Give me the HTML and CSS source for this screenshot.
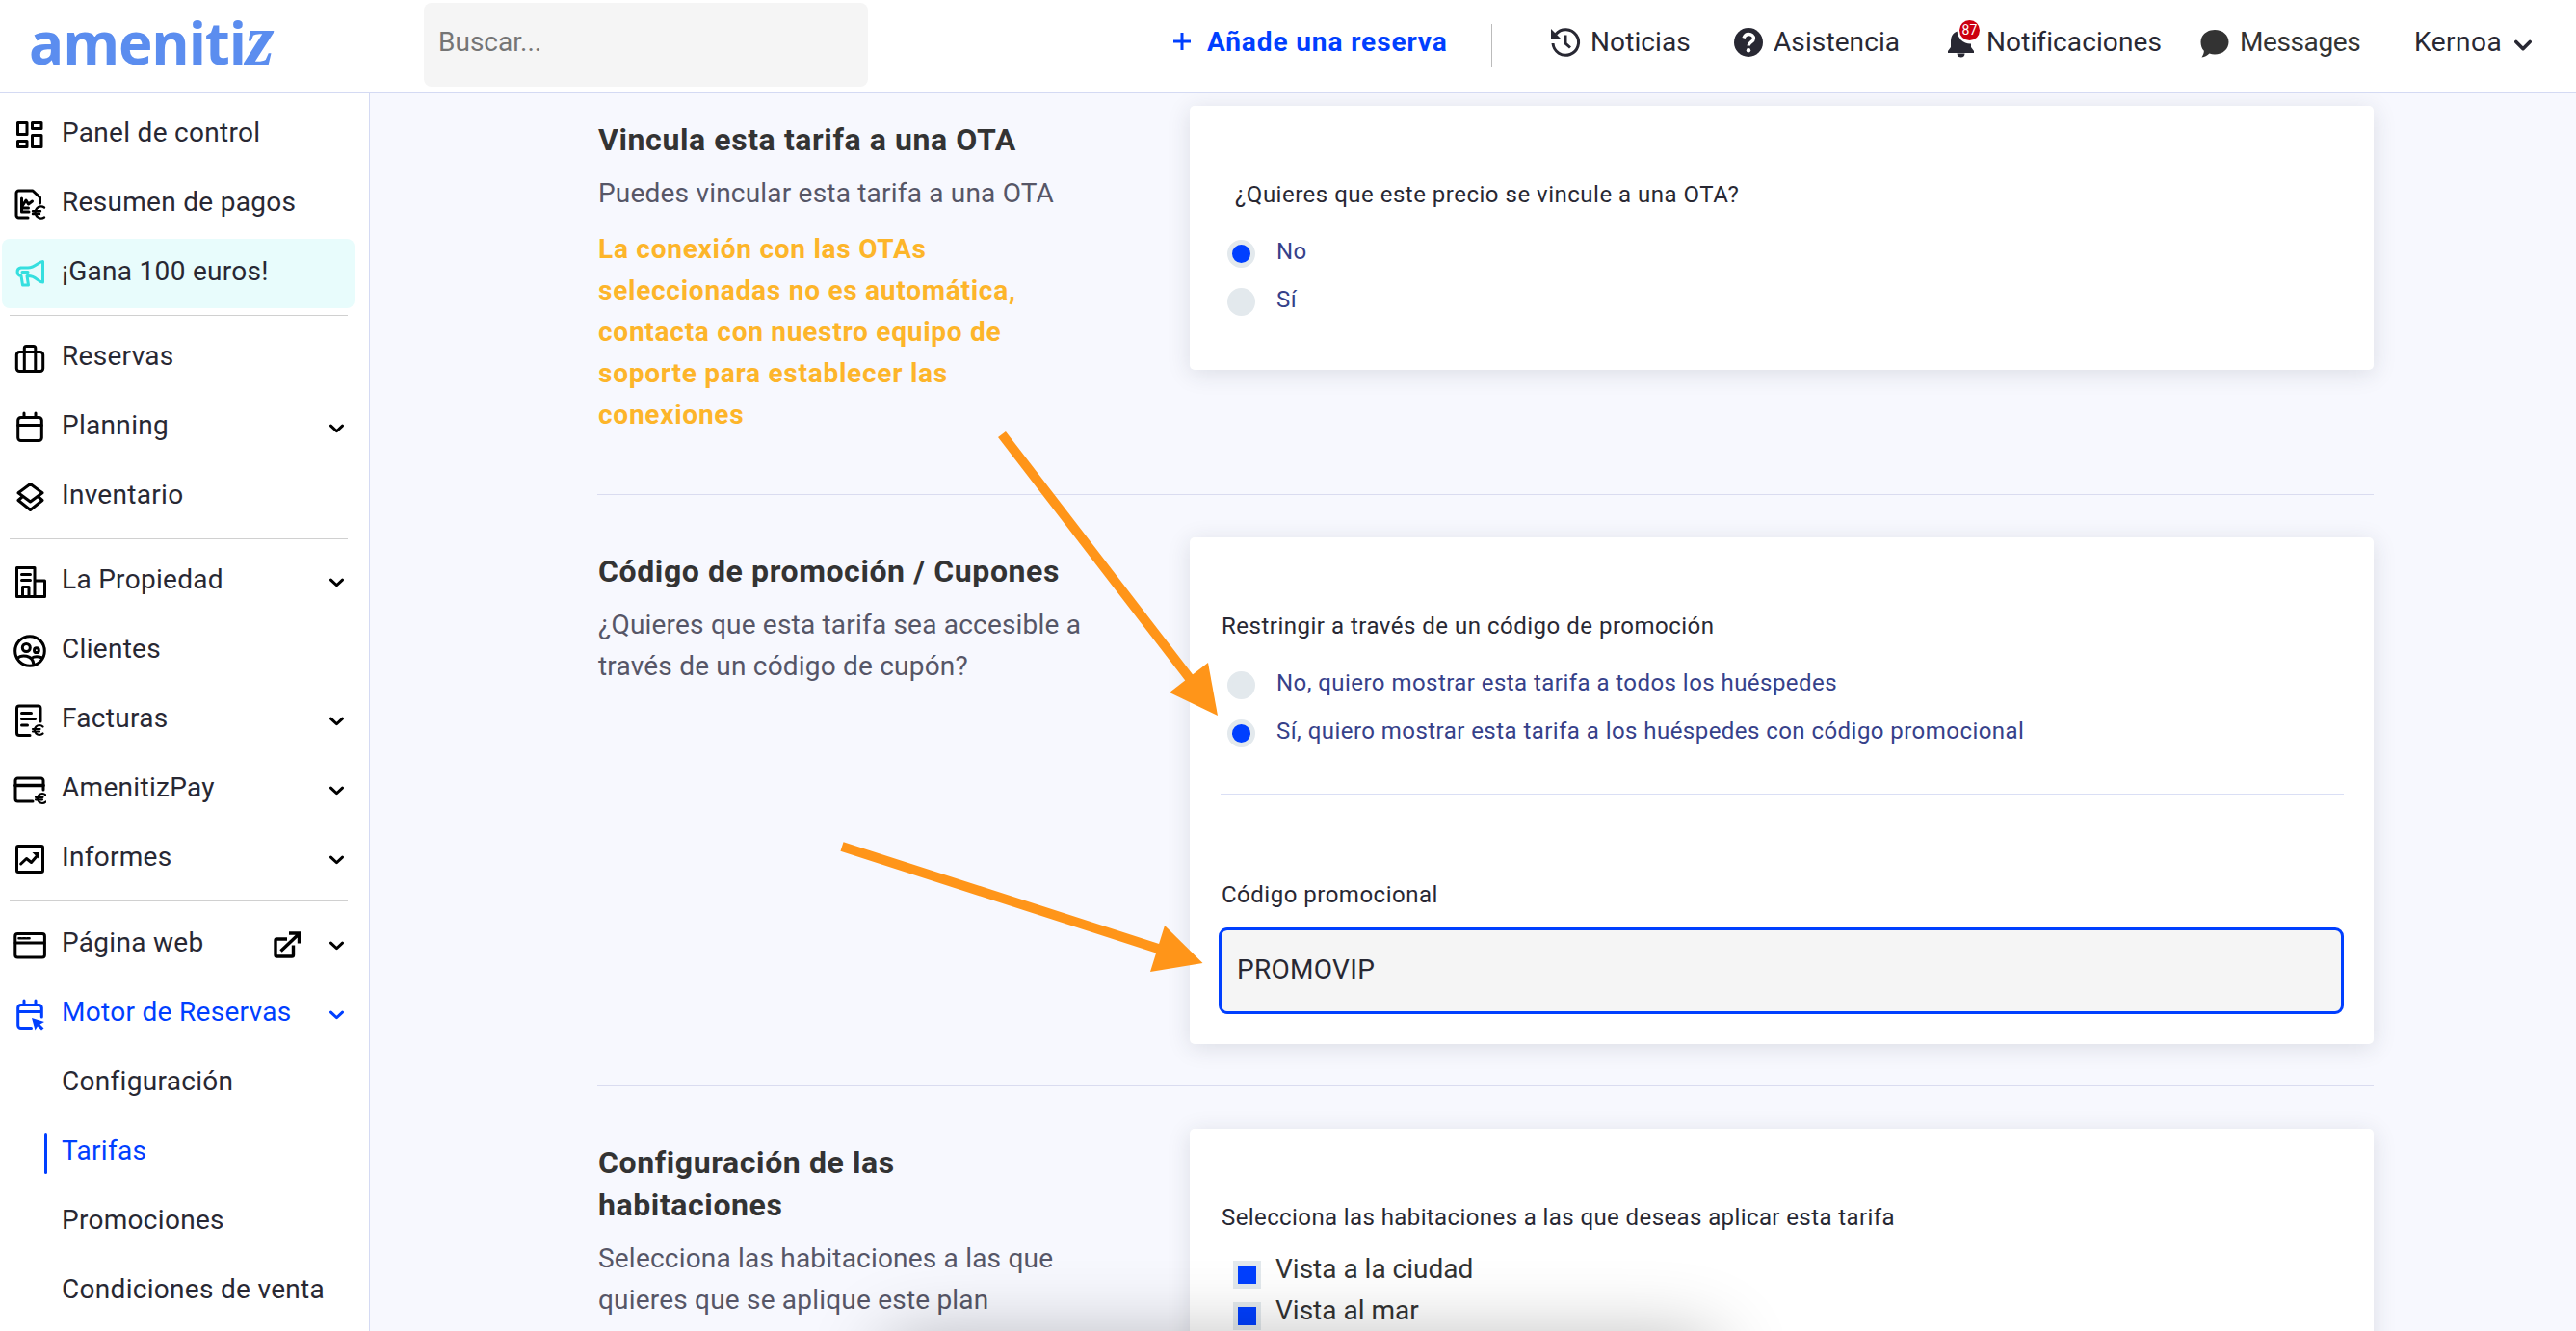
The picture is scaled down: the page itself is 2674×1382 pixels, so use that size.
FILE: index.html
```
<!DOCTYPE html>
<html lang="es">
<head>
  <meta charset="utf-8">
  <title>Amenitiz - Tarifas</title>
  <link rel="stylesheet" href="styles.css">
</head>
<body>
  <header class="topbar">
    <a class="logo">ameniti<span class="logo-z">z</span></a>
    <input class="search" type="text" placeholder="Buscar...">
    <nav class="top-nav">
      <a class="add-booking">
        <svg class="plus" viewBox="0 0 18 18"><path d="M9 0v18M0 9h18"/></svg>
        <span>Añade una reserva</span>
      </a>
      <a class="nav-item news">
        <svg class="nav-icon" viewBox="0 0 32 32"><path d="M6 7.500A13.300 13.300 0 1 1 3 17" fill="none" stroke="currentColor" stroke-width="3"/><path d="M1 2v10.500h10.500z" fill="currentColor"/><path d="M16 8.500V17l5 4.500" fill="none" stroke="currentColor" stroke-width="3"/></svg>
        <span>Noticias</span>
      </a>
      <a class="nav-item help">
        <svg class="nav-icon" viewBox="0 0 32 32"><circle cx="16" cy="16" r="15" fill="currentColor"/><path d="M11 11.500c1-3 3-4 5.200-4 3 0 5.200 1.800 5.200 4.500 0 3.500-5.200 3.800-5.200 7.500" fill="none" stroke="#fff" stroke-width="3.400"/><circle cx="16" cy="24.300" r="2.200" fill="#fff"/></svg>
        <span>Asistencia</span>
      </a>
      <a class="nav-item alerts">
        <svg class="nav-icon" viewBox="0 0 32 32"><path d="M14 4c-6 .8-9 5-9 11v6l-3 4v2h27v-2l-3-4v-6C26 9 21 4 14 4zM11.500 27.500a4 4 0 0 0 8 0z" fill="currentColor"/><circle cx="25.500" cy="3.500" r="14" fill="#fff"/></svg>
        <b class="badge">87</b>
        <span>Notificaciones</span>
      </a>
      <a class="nav-item messages">
        <svg class="nav-icon" viewBox="0 0 32 32"><path d="M16 3c8.300 0 14.500 5.500 14.500 12.700S24.300 28.500 16 28.500c-2 0-3.800-.3-5.500-.9C8 30 5 31.300 2.500 31.500c1.200-2 2.500-4.500 2.300-6.700C2.600 22.400 1.500 19.300 1.500 15.700 1.500 8.500 7.700 3 16 3z" fill="currentColor"/></svg>
        <span>Messages</span>
      </a>
      <a class="nav-item user">
        <span>Kernoa</span>
        <svg class="chevron" viewBox="0 0 20 14"><path d="M2 2.500l8 8 8-8"/></svg>
      </a>
    </nav>
  </header>

  <div class="layout">
    <aside class="sidebar">
      <a class="item">
        <svg class="icon" viewBox="0 0 34 34"><rect x="4.500" y="4.500" width="9.500" height="12"/><rect x="19.500" y="4.500" width="9.500" height="6"/><rect x="4.500" y="23.500" width="9.500" height="6"/><rect x="19.500" y="17.500" width="9.500" height="12"/></svg>
        <span>Panel de control</span>
      </a>
      <a class="item">
        <svg class="icon" viewBox="0 0 34 34"><path d="M15 31H5.500A2.500 2.500 0 0 1 3 28.500V5.500A2.500 2.500 0 0 1 5.500 3H20l7.500 7v6"/><path d="M8.500 11v14H16M8.500 20l4.500-7 2.500 4 4-3M8.500 21h7"/><path d="M32 20.500a6 6 0 1 0 0 10M20 24.300h8M20 27h7" stroke-width="2.400"/></svg>
        <span>Resumen de pagos</span>
      </a>
      <a class="item promo">
        <svg class="icon" viewBox="0 0 34 34"><path d="M30.500 4.500V26c-5 0-7-6.500-15-6.500H14l1.500 9.500h-6L8 19.500a4.300 4.300 0 0 1-.5-8.500H15c8 0 11-6.500 15.500-6.500zM9 15.500h6"/></svg>
        <span>¡Gana 100 euros!</span>
      </a>
      <hr>
      <a class="item">
        <svg class="icon" viewBox="0 0 34 34"><rect x="3.300" y="10.500" width="27.400" height="20" rx="3"/><path d="M11.300 30.500V6.500a2 2 0 0 1 2-2h7.500a2 2 0 0 1 2 2v24"/></svg>
        <span>Reservas</span>
      </a>
      <a class="item">
        <svg class="icon" viewBox="0 0 34 34"><rect x="4.700" y="6.500" width="24.600" height="24" rx="3"/><path d="M4.700 14.500h24.600M11 2v4M23 2v4"/></svg>
        <span>Planning</span>
        <svg class="chevron" viewBox="0 0 20 14"><path d="M2 2.500l8 7.500 8-7.500"/></svg>
      </a>
      <a class="item">
        <svg class="icon" viewBox="0 0 34 34"><path d="M17.500 3.500L30 12.800 17.500 22 5 12.800zM9 17l-4 3.500 12.500 10L30 20.500 26 17"/></svg>
        <span>Inventario</span>
      </a>
      <hr>
      <a class="item">
        <svg class="icon" viewBox="0 0 34 34"><path d="M3.500 2.500h18.500v30H3.500zM22 16h10.500v16.500H22M9.500 32.500V22.500h6.500v10M8.500 9.500h9M8.500 15.500h9"/></svg>
        <span>La Propiedad</span>
        <svg class="chevron" viewBox="0 0 20 14"><path d="M2 2.500l8 7.500 8-7.500"/></svg>
      </a>
      <a class="item">
        <svg class="icon" viewBox="0 0 34 34"><circle cx="17" cy="17" r="15.300"/><circle cx="13.300" cy="13.500" r="4"/><circle cx="23.900" cy="16.200" r="2.400"/><path d="M4 24.500c4-4 16-4 17 6.500M18.500 24.500c3-2 7.500-2 11-.5"/></svg>
        <span>Clientes</span>
      </a>
      <a class="item">
        <svg class="icon" viewBox="0 0 34 34"><path d="M17 32.500H6A2.500 2.500 0 0 1 3.500 30V4.500A2.500 2.500 0 0 1 6 2h19.500A2.500 2.500 0 0 1 28 4.500V18M8.500 9.500h10M8.500 15.500h14M8.500 22h6"/><path d="M30.500 23.500a5 5 0 1 0 0 7M20 26h7.500M20 28.500h7" stroke-width="2.200"/></svg>
        <span>Facturas</span>
        <svg class="chevron" viewBox="0 0 20 14"><path d="M2 2.500l8 7.500 8-7.500"/></svg>
      </a>
      <a class="item">
        <svg class="icon" viewBox="0 0 34 34"><path d="M20 29H4.500A2.500 2.500 0 0 1 2 26.500v-19A2.500 2.500 0 0 1 4.500 5h24A2.500 2.500 0 0 1 31 7.500V17"/><path d="M2 12.500h29" stroke-width="3.600"/><path d="M33.500 22.500a5 5 0 1 0 0 7M23 24.800h7.500M23 27.300h7" stroke-width="2.200"/></svg>
        <span>AmenitizPay</span>
        <svg class="chevron" viewBox="0 0 20 14"><path d="M2 2.500l8 7.500 8-7.500"/></svg>
      </a>
      <a class="item">
        <svg class="icon" viewBox="0 0 34 34"><rect x="3.500" y="3.500" width="27" height="27" rx="1.500"/><path d="M7.700 22l5.800-5.500 5 4 7-8"/><path d="M19.500 10h7.500v7.500z" fill="currentColor" stroke="none"/></svg>
        <span>Informes</span>
        <svg class="chevron" viewBox="0 0 20 14"><path d="M2 2.500l8 7.500 8-7.500"/></svg>
      </a>
      <hr class="wide">
      <a class="item">
        <svg class="icon" viewBox="0 0 34 34"><rect x="1.800" y="5.500" width="30.600" height="24.500" rx="2.500"/><path d="M2 15h30"/><path d="M5.500 10.300H8M9.800 10.300h2.500M14.100 10.300h2.500" stroke-width="2.500"/></svg>
        <span>Página web</span>
        <svg class="external" viewBox="0 0 28 28"><path d="M14 8H3.500A1.500 1.500 0 0 0 2 9.500v15A1.500 1.500 0 0 0 3.500 26h15.500a1.500 1.500 0 0 0 1.500-1.500V14.500M7.500 20.500L26 3M16 2h10.500v10.500"/></svg>
        <svg class="chevron" viewBox="0 0 20 14"><path d="M2 2.500l8 7.500 8-7.500"/></svg>
      </a>
      <a class="item open">
        <svg class="icon" viewBox="0 0 34 34"><path d="M18.500 31.500H7.700a3 3 0 0 1-3-3v-18a3 3 0 0 1 3-3h18.600a3 3 0 0 1 3 3V20M4.700 14.500h24.600M11 3v4M23 3v4"/><path d="M19 21l13 4-4.500 2.500 4 4-2.500 2-4-4-2.500 4z" fill="currentColor" stroke="none"/></svg>
        <span>Motor de Reservas</span>
        <svg class="chevron" viewBox="0 0 20 14"><path d="M2 2.500l8 7.500 8-7.500"/></svg>
      </a>
      <a class="item sub"><span>Configuración</span></a>
      <a class="item sub active"><span>Tarifas</span></a>
      <a class="item sub"><span>Promociones</span></a>
      <a class="item sub"><span>Condiciones de venta</span></a>
    </aside>

    <main class="content">
      <section class="row">
        <div class="info">
          <h2>Vincula esta tarifa a una OTA</h2>
          <p>Puedes vincular esta tarifa a una OTA</p>
          <p class="warning">La conexión con las OTAs<br>seleccionadas no es automática,<br>contacta con nuestro equipo de<br>soporte para establecer las<br>conexiones</p>
        </div>
        <div class="card card-ota">
          <div class="label indent">¿Quieres que este precio se vincule a una OTA?</div>
          <label class="option"><i class="radio checked"></i><span>No</span></label>
          <label class="option"><i class="radio"></i><span>Sí</span></label>
        </div>
      </section>

      <section class="row">
        <div class="info">
          <h2>Código de promoción / Cupones</h2>
          <p>¿Quieres que esta tarifa sea accesible a<br>través de un código de cupón?</p>
        </div>
        <div class="card card-code">
          <div class="label">Restringir a través de un código de promoción</div>
          <label class="option"><i class="radio"></i><span>No, quiero mostrar esta tarifa a todos los huéspedes</span></label>
          <label class="option"><i class="radio checked"></i><span>Sí, quiero mostrar esta tarifa a los huéspedes con código promocional</span></label>
          <div class="code-field">
            <div class="label">Código promocional</div>
            <input class="code-input" type="text" value="PROMOVIP">
          </div>
        </div>
      </section>

      <section class="row">
        <div class="info">
          <h2>Configuración de las<br>habitaciones</h2>
          <p>Selecciona las habitaciones a las que<br>quieres que se aplique este plan</p>
        </div>
        <div class="card card-rooms">
          <div class="label">Selecciona las habitaciones a las que deseas aplicar esta tarifa</div>
          <label class="room"><i class="check"></i><span>Vista a la ciudad</span></label>
          <label class="room"><i class="check"></i><span>Vista al mar</span></label>
        </div>
      </section>
    </main>
  </div>

  <div class="bottom-shadow"></div>

  <svg class="arrows" viewBox="0 0 2674 1382">
    <path d="M1040 451L1240 711M874 879L1207 986.500"/>
    <polygon points="1264,743 1254,688 1214,719"/>
    <polygon points="1248.500,1000 1209,961 1194,1009"/>
  </svg>
</body>
</html>
```
FILE: styles.css
```
* {
  box-sizing: border-box;
}

body {
  margin: 0;
  height: 1382px;
  overflow: hidden;
  background-color: #f7f8fe;
  color: #282833;
  font-family: Roboto, "Open Sans", sans-serif;
  font-size: 28px;
}

.topbar {
  display: flex;
  height: 97px;
  padding-left: 30px;
  background-color: white;
  border-bottom: 1px solid #d4daf3;
  position: relative;
  z-index: 2;
}

.logo {
  width: 410px;
  color: #5b8def;
  font-family: "Open Sans", sans-serif;
  font-weight: 700;
  font-size: 60px;
  line-height: 89px;
  letter-spacing: -1.1px;
}

.logo-z {
  font-family: "Liberation Serif", serif;
  font-style: italic;
  font-size: 76px;
  line-height: 60px;
}

.search {
  width: 461px;
  height: 87px;
  margin-top: 3px;
  padding: 0 15px 6px;
  border: none;
  border-radius: 8px;
  background-color: #f5f5f5;
  font: inherit;
}

.search::placeholder {
  color: #757575;
}

.top-nav {
  display: grid;
  grid-template-columns: 331px 250px 221px 263px 223px auto;
  margin-left: 317px;
  height: 87px;
  align-items: center;
}

.add-booking {
  display: flex;
  align-items: center;
  gap: 17px;
  height: 45px;
  margin-top: 8px;
  padding-bottom: 9px;
  color: #003fff;
  font-weight: 700;
  letter-spacing: 0.9px;
  border-right: 1px solid #bbb;
}

.plus {
  width: 18px;
  height: 18px;
  stroke: currentColor;
  stroke-width: 3;
}

.nav-item {
  display: flex;
  align-items: center;
  gap: 10px;
  position: relative;
  letter-spacing: 0.1px;
}

.news {
  margin-left: 60px;
}

.nav-icon {
  width: 32px;
  height: 32px;
  overflow: visible;
}

.badge {
  position: absolute;
  left: 14px;
  top: -6px;
  width: 21px;
  height: 21px;
  border-radius: 50%;
  background-color: #cc000f;
  color: white;
  font-size: 14px;
  font-weight: 400;
  line-height: 21px;
  text-align: center;
}

.messages {
  color: #333;
  letter-spacing: -0.4px;
}

.user {
  gap: 13px;
  letter-spacing: 0.5px;
}

.chevron {
  width: 18px;
  height: 13px;
  fill: none;
  stroke: currentColor;
  stroke-width: 4;
  stroke-linecap: round;
  stroke-linejoin: round;
}

.user .chevron {
  margin-top: 8px;
}

.layout {
  display: flex;
}

.sidebar {
  width: 384px;
  height: 1285px;
  padding-top: 7px;
  background-color: white;
  border-right: 1px solid #d4daf3;
  flex: none;
}

.item {
  display: flex;
  align-items: center;
  width: 366px;
  height: 72px;
  margin-left: 2px;
  padding: 0 11px 0 12px;
  border-radius: 8px;
  letter-spacing: 0.3px;
}

.item span {
  flex: 1;
  margin-left: 16px;
  padding-bottom: 5px;
}

.icon {
  width: 34px;
  height: 34px;
  fill: none;
  stroke: currentColor;
  stroke-width: 3;
  stroke-linejoin: round;
  stroke-linecap: round;
  color: black;
}

.item .chevron {
  width: 15px;
  height: 11px;
  margin: 3px 0 0;
  color: black;
}

.external {
  width: 28px;
  height: 28px;
  margin-right: 30px;
  fill: none;
  stroke: black;
  stroke-width: 3.4;
}

.promo {
  background-color: #e8fcfc;
}

.promo .icon {
  color: #35dfdf;
}

.sidebar hr {
  width: 351px;
  height: 1px;
  margin: 7px 0 8px 10px;
  border: none;
  background-color: #d0d0d0;
}

.sidebar .wide {
  margin-bottom: 9px;
}

.open,
.open .icon,
.open .chevron,
.active {
  color: #003fff;
}

.sub {
  padding-left: 46px;
}

.active {
  padding-left: 44px;
}

.active::before {
  content: "";
  width: 3px;
  height: 43px;
  border-radius: 2px;
  background-color: #003fff;
}

.active span {
  margin-left: 15px;
}

.content {
  width: 1844px;
  margin-left: 236px;
  padding-top: 13px;
}

.row {
  display: flex;
  width: 1844px;
  margin-bottom: 43px;
}

.row + .row {
  padding-top: 44px;
  border-top: 1px solid #dadcf0;
}

.info {
  width: 615px;
  padding: 13px 0 3px 1px;
}

.info h2 {
  margin: 0 0 12px;
  color: #333;
  font-size: 32px;
  line-height: 44px;
  letter-spacing: 0.6px;
}

.info p {
  margin: 0 0 15px;
  color: #565667;
  line-height: 43px;
  letter-spacing: 0.2px;
}

.info .warning {
  color: #fdb52a;
  font-weight: 700;
  letter-spacing: 0.75px;
}

.card {
  width: 1229px;
  padding: 78px 31px 0 32px;
  background-color: white;
  border-radius: 5px;
  box-shadow: 0 4px 24px rgba(40, 50, 60, 0.13);
  font-size: 24px;
}

.card-ota {
  height: 274px;
}

.card-code {
  height: 526px;
}

.card-rooms {
  height: 400px;
}

.label {
  line-height: 28px;
  padding-left: 1px;
  letter-spacing: 0.5px;
}

.card-rooms .label {
  letter-spacing: 0.4px;
}

.label.indent {
  padding-left: 15px;
}

.option {
  display: flex;
  height: 50px;
  align-items: center;
  padding-left: 7px;
  color: #36418a;
  letter-spacing: 0.45px;
}

.label + .option {
  margin-top: 22px;
}

.option span {
  padding-bottom: 5px;
}

.radio,
.check {
  width: 29px;
  height: 29px;
  margin-right: 22px;
  border: 5px solid #e3e9ed;
  background-color: #e3e9ed;
}

.radio {
  border-radius: 50%;
}

.radio.checked,
.check {
  background-color: #003fff;
}

.code-field {
  margin-top: 38px;
  padding-top: 90px;
  border-top: 1px solid #dadff5;
}

.code-input {
  width: 1168px;
  height: 90px;
  margin: 20px 0 0 -2px;
  padding: 0 16px 4px;
  border: 3px solid #003fff;
  border-radius: 9px;
  background-color: #f5f5f5;
  color: #282833;
  font: inherit;
  font-size: 28px;
  letter-spacing: 0.3px;
}

.room {
  display: flex;
  height: 43px;
  align-items: center;
  padding-left: 13px;
  color: #333;
  font-size: 28px;
}

.label + .room {
  margin-top: 24px;
}

.check {
  margin-right: 15px;
}

.room span {
  padding-bottom: 12px;
}

/* shadow of the floating bar just under the fold */
.bottom-shadow {
  position: absolute;
  left: 920px;
  top: 1392px;
  width: 860px;
  height: 80px;
  border-radius: 20px;
  box-shadow: 0 0 80px rgba(0, 0, 0, 0.3);
}

.arrows {
  position: absolute;
  left: 0;
  top: 0;
  width: 2674px;
  height: 1382px;
  fill: #ff9519;
  z-index: 3;
}

.arrows path {
  stroke: #ff9519;
  stroke-width: 10;
}
```
